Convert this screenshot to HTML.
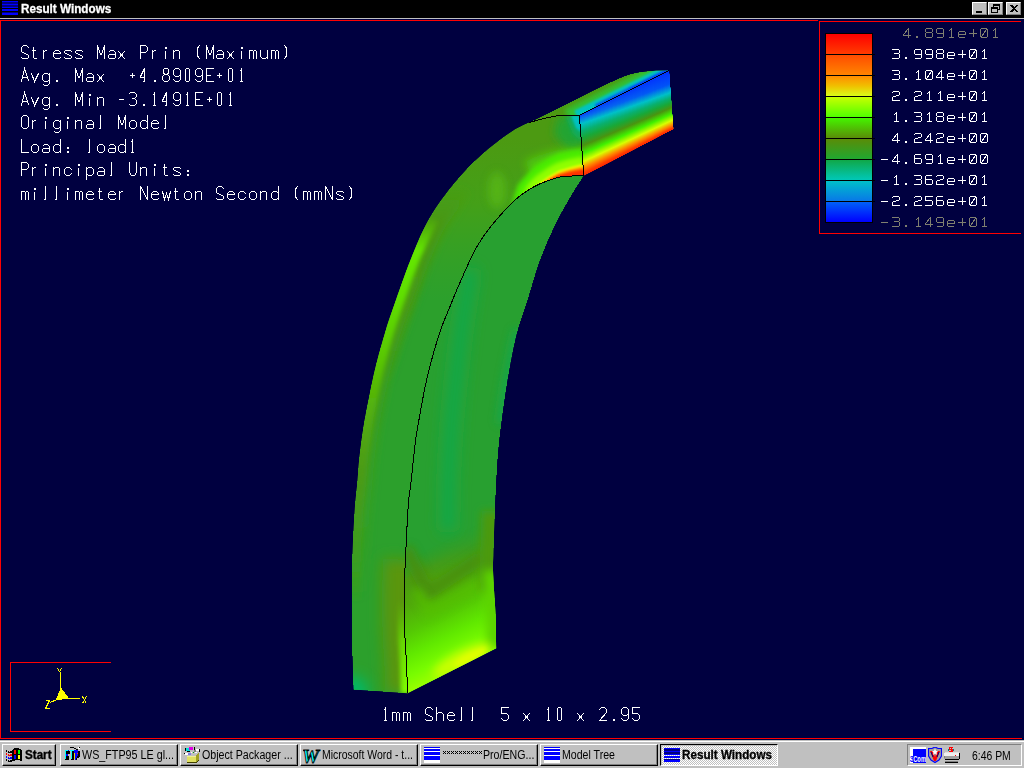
<!DOCTYPE html>
<html><head><meta charset="utf-8"><title>Result Windows</title>
<style>
html,body{margin:0;padding:0;width:1024px;height:768px;overflow:hidden;background:#000040;font-family:"Liberation Sans",sans-serif;}
#v{position:absolute;left:0;top:0;width:1024px;height:768px;}
.abs{position:absolute;}
#tb{position:absolute;left:0;top:0;width:1024px;height:18px;background:#000;}
#tbl{position:absolute;left:0;top:18px;width:1024px;height:1px;background:#c0c0c0;}
#ttl{position:absolute;left:20.6px;top:1px;height:16px;line-height:16px;font-size:12px;font-weight:bold;color:#fff;-webkit-text-stroke:0.3px #fff;white-space:nowrap;transform-origin:0 50%;transform:scaleX(0.975);}
.cb{position:absolute;top:2px;height:13px;width:15px;background:#c0c0c0;box-sizing:border-box;border-top:1px solid #fff;border-left:1px solid #fff;border-right:1px solid #808080;border-bottom:1px solid #808080;}
#task{position:absolute;left:0;top:740px;width:1024px;height:28px;background:#c0c0c0;}
#task:before{content:"";position:absolute;left:0;top:1px;width:1024px;height:1px;background:#fff;}
.btn{position:absolute;top:4px;height:22px;box-sizing:border-box;background:#c0c0c0;border-top:1px solid #fff;border-left:1px solid #fff;border-right:1px solid #000;border-bottom:1px solid #000;}
.btn:after{content:"";position:absolute;left:0;top:0;right:0;bottom:0;border-right:1px solid #808080;border-bottom:1px solid #808080;}
.btn.on{border-top:1px solid #000;border-left:1px solid #000;border-right:1px solid #fff;border-bottom:1px solid #fff;background-color:#c0c0c0;background-image:linear-gradient(45deg,#fff 25%,transparent 25%,transparent 75%,#fff 75%),linear-gradient(45deg,#fff 25%,transparent 25%,transparent 75%,#fff 75%);background-size:2px 2px;background-position:0 0,1px 1px;}
.btn.on:after{border:none;border-top:1px solid #c0c0c0;border-left:1px solid #c0c0c0;}
.bt{position:absolute;left:21px;top:3px;height:14px;line-height:14px;font-size:12px;color:#000;white-space:nowrap;transform-origin:0 50%;}
.ic{position:absolute;left:3px;top:2px;width:16px;height:16px;overflow:hidden;}
#tray{position:absolute;left:907px;top:4px;width:115px;height:22px;box-sizing:border-box;border-top:1px solid #808080;border-left:1px solid #808080;border-right:1px solid #fff;border-bottom:1px solid #fff;}
#clock{position:absolute;left:64px;top:4px;font-size:12px;line-height:14px;color:#000;white-space:nowrap;transform-origin:0 50%;transform:scaleX(0.868);}

</style></head><body>
<svg id="v" width="1024" height="768" viewBox="0 0 1024 768">
<defs>
<path id="m65" d="M0,13 L3,0 L7,12 M1,9 L5,9"/><path id="m69" d="M7,0 L0,0 L0,13 L7,13 M0,7 L4,7"/><path id="m76" d="M0,0 L0,13 L7,13"/><path id="m77" d="M0,13 L0,0 L3,9 L4,9 L7,0 L7,13"/><path id="m78" d="M0,13 L0,0 L7,13 L7,0"/><path id="m79" d="M2,0 L5,0 L7,2 L7,11 L5,13 L2,13 L0,11 L0,2 Z"/><path id="m80" d="M0,13 L0,0 L5,0 L7,2 L7,5 L5,7 L0,7"/><path id="m83" d="M7,2 L6,1 L5,0 L2,0 L0,2 L0,6 L1,7 L6,9 L7,10 L7,12 L6,13 L1,13 L0,12"/><path id="m85" d="M0,0 L0,10 L2,13 L5,13 L7,10 L7,0"/><path id="m97" d="M1,6 L2,5 L5,5 L7,7 L7,12 L6,13 L1,13 L0,12 L0,10 L1,9 L7,9"/><path id="m99" d="M7,7 L5,5 L2,5 L0,7 L0,11 L2,13 L5,13 L7,11"/><path id="m100" d="M7,0 L7,13 M7,7 L5,5 L2,5 L0,7 L0,11 L2,13 L5,13 L7,11"/><path id="m101" d="M0,8 L7,8 L7,7 L5,5 L2,5 L0,7 L0,11 L2,13 L6,13 L7,12"/><path id="m103" d="M7,5 L7,15 L5,17 L2,17 L1,16 M7,7 L5,5 L2,5 L0,7 L0,11 L2,13 L5,13 L7,11"/><path id="m104" d="M0,0 L0,13 M0,7 L2,5 L5,5 L7,7 L7,13"/><path id="m105" d="M3,6 L3,13 M3,2 L4,2 L4,3 L3,3 Z"/><path id="m108" d="M3,0 L3,13 L2,13"/><path id="m109" d="M0,5 L0,13 M0,6 L1,5 L3,5 L4,6 L4,13 M4,6 L5,5 L6,5 L7,6 L7,13"/><path id="m110" d="M0,5 L0,13 M0,7 L2,5 L5,5 L6,6 L6,13"/><path id="m111" d="M2,5 L5,5 L7,7 L7,11 L5,13 L2,13 L0,11 L0,7 Z"/><path id="m112" d="M0,5 L0,17 M0,7 L2,5 L5,5 L7,7 L7,11 L5,13 L2,13 L0,11"/><path id="m114" d="M1,5 L1,13 M1,7 L3,5 L4,5"/><path id="m115" d="M7,6 L6,5 L1,5 L0,6 L0,7 L1,8 L6,10 L7,11 L7,12 L6,13 L1,13 L0,12"/><path id="m116" d="M2,2 L2,12 L3,13 L5,13 M1,5 L4,5"/><path id="m117" d="M0,5 L0,11 L2,13 L5,13 L7,11 M7,5 L7,13"/><path id="m118" d="M0,5 L3,13 L7,5"/><path id="m119" d="M0,5 L2,13 L4,7 L6,13 L8,5"/><path id="m120" d="M0,6 L6,13 M6,6 L0,13"/><path id="m48" d="M2,0 L4,0 L5,1 L5,12 L4,13 L2,13 L1,12 L1,1 Z"/><path id="m49" d="M2,2 L3,1 L3,13 M2,13 L4,13 M3,0 L3,1"/><path id="m50" d="M0,2 L2,0 L5,0 L7,2 L7,5 L0,13 L7,13"/><path id="m51" d="M0,1 L1,0 L5,0 L7,2 L7,4 L5,6 L3,6 M5,6 L7,8 L7,11 L5,13 L1,13 L0,12"/><path id="m52" d="M4,0 L4,13 M4,0 L0,8 L0,9 L4,9 M3,13 L4,13"/><path id="m53" d="M7,0 L0,0 L0,6 L5,6 L7,8 L7,11 L5,13 L2,13 L0,11"/><path id="m56" d="M2,0 L5,0 L6,1 L6,4 L5,6 L2,6 L1,4 L1,1 Z M2,6 L0,8 L0,11 L2,13 L5,13 L7,11 L7,8 L5,6"/><path id="m57" d="M7,6 L5,8 L2,8 L0,6 L0,2 L2,0 L5,0 L7,2 L7,11 L5,13 L2,13 L0,11"/><path id="m43" d="M1,7 L5,7 M3,5 L3,9"/><path id="m45" d="M1,7 L5,7"/><path id="m46" d="M3,12 L4,12 L4,13 L3,13 Z"/><path id="m58" d="M3,8 L4,8 L4,9 L3,9 Z M3,12 L4,12 L4,13 L3,13 Z"/><path id="m40" d="M4,0 L3,1 L2,3 L2,10 L3,12 L4,13"/><path id="m41" d="M2,0 L3,1 L4,3 L4,10 L3,12 L2,13"/><path id="l48" d="M1,0 L6,0 L7,1 L7,8 L6,9 L1,9 L0,8 L0,1 Z M1,8 L6,1"/><path id="l49" d="M2,2 L4,0 L4,9 M2,9 L6,9"/><path id="l50" d="M0,1 L1,0 L6,0 L7,1 L7,3 L6,4 L1,5 L0,6 L0,9 L7,9"/><path id="l51" d="M0,0 L6,0 L7,1 L7,3 L6,4 L2,4 M6,4 L7,5 L7,8 L6,9 L0,9"/><path id="l52" d="M5,9 L5,0 L0,6 L0,7 L7,7"/><path id="l53" d="M7,0 L0,0 L0,4 L6,4 L7,5 L7,8 L6,9 L0,9"/><path id="l54" d="M6,0 L1,0 L0,1 L0,8 L1,9 L6,9 L7,8 L7,5 L6,4 L0,4"/><path id="l56" d="M1,0 L6,0 L7,1 L7,3 L6,4 L1,4 L0,3 L0,1 Z M1,4 L0,5 L0,8 L1,9 L6,9 L7,8 L7,5 L6,4"/><path id="l57" d="M7,5 L1,5 L0,4 L0,1 L1,0 L6,0 L7,1 L7,8 L6,9 L1,9"/><path id="l101" d="M0,6 L7,6 L7,4 L6,3 L1,3 L0,4 L0,8 L1,9 L6,9"/><path id="l43" d="M0,5 L7,5 M3.5,1 L3.5,8"/><path id="l45" d="M0,5 L6,5"/><path id="l46" d="M2,8 L3,8 L3,9 L2,9 Z"/>

<linearGradient id="b1" x1="0" y1="0" x2="0" y2="1"><stop offset="0" stop-color="#ff0000"/><stop offset="1" stop-color="#ff3c00"/></linearGradient>
<linearGradient id="b2" x1="0" y1="0" x2="0" y2="1"><stop offset="0" stop-color="#ff4c00"/><stop offset="1" stop-color="#ff8400"/></linearGradient>
<linearGradient id="b3" x1="0" y1="0" x2="0" y2="1"><stop offset="0" stop-color="#ff8c00"/><stop offset="0.5" stop-color="#f0c000"/><stop offset="1" stop-color="#d8fc18"/></linearGradient>
<linearGradient id="b4" x1="0" y1="0" x2="0" y2="1"><stop offset="0" stop-color="#c8ff00"/><stop offset="1" stop-color="#50ff00"/></linearGradient>
<linearGradient id="b5" x1="0" y1="0" x2="0" y2="1"><stop offset="0" stop-color="#44f400"/><stop offset="1" stop-color="#5a8c08"/></linearGradient>
<linearGradient id="b6" x1="0" y1="0" x2="0" y2="1"><stop offset="0" stop-color="#5a8c08"/><stop offset="1" stop-color="#20a830"/></linearGradient>
<linearGradient id="b7" x1="0" y1="0" x2="0" y2="1"><stop offset="0" stop-color="#10a848"/><stop offset="1" stop-color="#00c8b8"/></linearGradient>
<linearGradient id="b8" x1="0" y1="0" x2="0" y2="1"><stop offset="0" stop-color="#00c0c8"/><stop offset="1" stop-color="#0878e8"/></linearGradient>
<linearGradient id="b9" x1="0" y1="0" x2="0" y2="1"><stop offset="0" stop-color="#0060f8"/><stop offset="1" stop-color="#0000ff"/></linearGradient>


<clipPath id="cSide"><path d="M353.7,689.5 C353.5,682.6 352.6,662.9 352.3,648.0 C352.0,633.1 352.1,614.7 352.1,600.0 C352.1,585.3 351.9,574.7 352.3,560.0 C352.7,545.3 353.7,525.3 354.6,512.0 C355.5,498.7 356.8,489.2 357.6,480.0 C358.4,470.8 358.5,465.7 359.5,457.0 C360.5,448.3 361.8,437.8 363.4,427.7 C365.0,417.6 367.2,406.8 369.3,396.4 C371.4,385.9 373.3,376.1 376.1,365.0 C378.9,353.9 382.6,340.8 385.9,330.0 C389.2,319.2 391.6,312.5 396.0,300.0 C400.4,287.5 406.8,268.8 412.5,255.0 C418.2,241.2 422.9,229.6 430.0,217.5 C437.1,205.4 446.5,192.8 455.0,182.5 C463.5,172.2 471.5,164.0 481.0,155.5 C490.5,147.0 503.9,137.0 512.0,131.5 C520.1,126.0 526.5,124.0 529.4,122.5 C531.6,121.9 538.2,119.8 542.5,118.8 C546.8,117.7 551.9,116.8 555.0,116.2 C558.1,115.7 557.2,115.4 561.2,115.2 C565.3,115.1 576.4,115.2 579.4,115.2 L583.8,175.5 C581.9,175.6 576.5,175.8 572.5,176.0 C568.5,176.2 563.8,176.3 560.0,177.0 C556.2,177.7 554.2,178.5 550.0,180.0 C545.8,181.5 540.8,182.9 535.0,186.2 C529.2,189.6 522.5,193.1 515.0,200.0 C507.5,206.9 496.7,219.2 490.0,227.5 C483.3,235.8 480.0,240.8 475.0,250.0 C470.0,259.2 464.2,273.1 460.0,282.5 C455.8,291.9 453.2,298.6 450.0,306.5 C446.8,314.4 443.6,321.2 440.6,330.0 C437.6,338.8 434.2,350.5 431.8,359.3 C429.4,368.1 428.0,373.6 426.0,382.7 C424.0,391.8 421.8,403.9 420.0,414.0 C418.2,424.1 416.6,432.3 415.2,443.3 C413.8,454.3 412.4,469.9 411.3,480.0 C410.2,490.1 409.4,490.7 408.4,504.0 C407.4,517.3 406.0,546.8 405.4,560.0 C404.8,573.2 404.6,571.7 404.5,583.0 C404.4,594.3 404.3,614.9 404.6,628.0 C404.9,641.1 405.9,650.6 406.4,661.5 C406.9,672.4 407.4,687.9 407.6,693.2 Z"/></clipPath>
<clipPath id="cInner"><path d="M407.6,693.2 C407.4,687.9 406.9,672.4 406.4,661.5 C405.9,650.6 404.9,641.1 404.6,628.0 C404.3,614.9 404.4,594.3 404.5,583.0 C404.6,571.7 404.8,573.2 405.4,560.0 C406.0,546.8 407.4,517.3 408.4,504.0 C409.4,490.7 410.2,490.1 411.3,480.0 C412.4,469.9 413.8,454.3 415.2,443.3 C416.6,432.3 418.2,424.1 420.0,414.0 C421.8,403.9 424.0,391.8 426.0,382.7 C428.0,373.6 429.4,368.1 431.8,359.3 C434.2,350.5 437.6,338.8 440.6,330.0 C443.6,321.2 446.8,314.4 450.0,306.5 C453.2,298.6 455.8,291.9 460.0,282.5 C464.2,273.1 470.0,259.2 475.0,250.0 C480.0,240.8 483.3,235.8 490.0,227.5 C496.7,219.2 507.5,206.9 515.0,200.0 C522.5,193.1 529.2,189.6 535.0,186.2 C540.8,182.9 545.8,181.5 550.0,180.0 C554.2,178.5 556.2,177.7 560.0,177.0 C563.8,176.3 568.5,176.2 572.5,176.0 C576.5,175.8 581.9,175.6 583.8,175.5 C581.5,179.2 574.8,189.2 570.0,197.5 C565.2,205.8 560.0,214.6 555.0,225.0 C550.0,235.4 544.6,247.5 540.0,260.0 C535.4,272.5 531.2,288.3 527.5,300.0 C523.8,311.7 520.3,320.8 517.7,330.0 C515.1,339.2 513.9,345.6 511.9,355.4 C509.9,365.2 507.8,377.2 506.0,388.6 C504.2,400.0 502.5,412.7 501.1,423.8 C499.7,434.8 498.6,445.6 497.8,455.0 C497.0,464.4 496.8,470.6 496.2,480.0 C495.8,489.4 495.3,499.0 494.8,511.5 C494.3,524.0 493.6,545.2 493.3,555.0 C493.0,564.8 492.9,564.2 493.0,570.0 C493.1,575.8 493.6,582.7 494.0,590.0 C494.4,597.3 495.1,604.3 495.5,614.0 C495.9,623.7 496.1,642.6 496.2,648.3 Z"/></clipPath>
<clipPath id="cTop"><path d="M529.4,122.5 C533.7,120.4 546.6,114.2 555.0,110.0 C563.4,105.8 571.7,101.7 580.0,97.5 C588.3,93.3 596.7,88.8 605.0,85.0 C613.3,81.2 622.5,76.8 630.0,74.5 C637.5,72.2 643.5,71.8 650.0,71.2 C656.5,70.6 665.6,70.9 668.8,70.8 L579.4,115.2 C576.4,115.2 565.3,115.1 561.2,115.2 C557.2,115.4 558.1,115.7 555.0,116.2 C551.9,116.8 546.8,117.7 542.5,118.8 C538.2,119.8 531.6,121.9 529.4,122.5 Z"/></clipPath>
<clipPath id="cEnd"><path d="M579.4,115.2 L668.8,70.8 L673.1,128.8 L583.8,175.5 Z"/></clipPath>
<filter id="bl1" filterUnits="userSpaceOnUse" x="300" y="40" width="420" height="680"><feGaussianBlur stdDeviation="1"/></filter>
<filter id="bl2" filterUnits="userSpaceOnUse" x="300" y="40" width="420" height="680"><feGaussianBlur stdDeviation="2"/></filter>
<filter id="bl4" filterUnits="userSpaceOnUse" x="300" y="40" width="420" height="680"><feGaussianBlur stdDeviation="4"/></filter>
<filter id="bl7" filterUnits="userSpaceOnUse" x="300" y="40" width="420" height="680"><feGaussianBlur stdDeviation="7"/></filter>
<filter id="bl12" filterUnits="userSpaceOnUse" x="300" y="40" width="420" height="680"><feGaussianBlur stdDeviation="12"/></filter>
<linearGradient id="gEnd" gradientUnits="userSpaceOnUse" x1="580" y1="115.25" x2="604.5" y2="164.3">
<stop offset="0" stop-color="#0030ff"/><stop offset="0.12" stop-color="#0058f8"/><stop offset="0.28" stop-color="#00c0c4"/><stop offset="0.42" stop-color="#10a848"/><stop offset="0.53" stop-color="#4a9410"/><stop offset="0.65" stop-color="#40f000"/><stop offset="0.75" stop-color="#d8ff00"/><stop offset="0.85" stop-color="#ff8800"/><stop offset="0.95" stop-color="#ff3000"/><stop offset="1" stop-color="#ff1800"/>
</linearGradient>
<linearGradient id="ge0" gradientUnits="userSpaceOnUse" x1="581.0" y1="114.5" x2="604.7" y2="166.0"><stop offset="0.000" stop-color="#0840f8"/><stop offset="0.061" stop-color="#0870ec"/><stop offset="0.151" stop-color="#00c0c8"/><stop offset="0.271" stop-color="#08b070"/><stop offset="0.381" stop-color="#18a838"/><stop offset="0.511" stop-color="#4a9410"/><stop offset="0.641" stop-color="#40f000"/><stop offset="0.770" stop-color="#d8ff00"/><stop offset="0.870" stop-color="#ff8800"/><stop offset="0.950" stop-color="#ff4000"/><stop offset="1.000" stop-color="#ff2800"/></linearGradient>
<linearGradient id="ge1" gradientUnits="userSpaceOnUse" x1="584.9" y1="112.5" x2="608.6" y2="164.0"><stop offset="0.000" stop-color="#083ff8"/><stop offset="0.068" stop-color="#086eed"/><stop offset="0.161" stop-color="#00c0c8"/><stop offset="0.280" stop-color="#08b070"/><stop offset="0.388" stop-color="#18a838"/><stop offset="0.516" stop-color="#4a9410"/><stop offset="0.645" stop-color="#40f000"/><stop offset="0.774" stop-color="#d8ff00"/><stop offset="0.873" stop-color="#ff8800"/><stop offset="0.951" stop-color="#ff4000"/><stop offset="1.000" stop-color="#ff2800"/></linearGradient>
<linearGradient id="ge2" gradientUnits="userSpaceOnUse" x1="588.9" y1="110.5" x2="612.5" y2="161.9"><stop offset="0.000" stop-color="#073ff9"/><stop offset="0.076" stop-color="#076ded"/><stop offset="0.171" stop-color="#00c0c8"/><stop offset="0.289" stop-color="#08b070"/><stop offset="0.396" stop-color="#18a838"/><stop offset="0.522" stop-color="#4a9410"/><stop offset="0.649" stop-color="#40f000"/><stop offset="0.777" stop-color="#d8ff00"/><stop offset="0.876" stop-color="#ff8800"/><stop offset="0.953" stop-color="#ff4000"/><stop offset="1.000" stop-color="#ff2800"/></linearGradient>
<linearGradient id="ge3" gradientUnits="userSpaceOnUse" x1="592.9" y1="108.6" x2="616.5" y2="159.9"><stop offset="0.000" stop-color="#073ef9"/><stop offset="0.083" stop-color="#076cee"/><stop offset="0.181" stop-color="#00c0c8"/><stop offset="0.297" stop-color="#08b070"/><stop offset="0.403" stop-color="#18a838"/><stop offset="0.527" stop-color="#4a9410"/><stop offset="0.654" stop-color="#40f000"/><stop offset="0.781" stop-color="#d8ff00"/><stop offset="0.878" stop-color="#ff8800"/><stop offset="0.954" stop-color="#ff4000"/><stop offset="1.000" stop-color="#ff2800"/></linearGradient>
<linearGradient id="ge4" gradientUnits="userSpaceOnUse" x1="596.8" y1="106.6" x2="620.4" y2="157.8"><stop offset="0.000" stop-color="#073df9"/><stop offset="0.091" stop-color="#076aee"/><stop offset="0.191" stop-color="#00c0c8"/><stop offset="0.306" stop-color="#08b070"/><stop offset="0.411" stop-color="#18a838"/><stop offset="0.533" stop-color="#4a9410"/><stop offset="0.658" stop-color="#40f000"/><stop offset="0.784" stop-color="#d8ff00"/><stop offset="0.881" stop-color="#ff8800"/><stop offset="0.955" stop-color="#ff4000"/><stop offset="1.000" stop-color="#ff2800"/></linearGradient>
<linearGradient id="ge5" gradientUnits="userSpaceOnUse" x1="600.8" y1="104.6" x2="624.3" y2="155.8"><stop offset="0.000" stop-color="#063cfa"/><stop offset="0.098" stop-color="#0669ef"/><stop offset="0.202" stop-color="#00c0c8"/><stop offset="0.315" stop-color="#08b070"/><stop offset="0.418" stop-color="#18a838"/><stop offset="0.538" stop-color="#4a9410"/><stop offset="0.662" stop-color="#40f000"/><stop offset="0.788" stop-color="#d8ff00"/><stop offset="0.883" stop-color="#ff8800"/><stop offset="0.957" stop-color="#ff4000"/><stop offset="1.000" stop-color="#ff2800"/></linearGradient>
<linearGradient id="ge6" gradientUnits="userSpaceOnUse" x1="604.7" y1="102.6" x2="628.2" y2="153.7"><stop offset="0.000" stop-color="#063cfa"/><stop offset="0.106" stop-color="#0667ef"/><stop offset="0.212" stop-color="#00c0c8"/><stop offset="0.324" stop-color="#08b070"/><stop offset="0.426" stop-color="#18a838"/><stop offset="0.543" stop-color="#4a9410"/><stop offset="0.667" stop-color="#40f000"/><stop offset="0.791" stop-color="#d8ff00"/><stop offset="0.886" stop-color="#ff8800"/><stop offset="0.958" stop-color="#ff4000"/><stop offset="1.000" stop-color="#ff2800"/></linearGradient>
<linearGradient id="ge7" gradientUnits="userSpaceOnUse" x1="608.7" y1="100.7" x2="632.1" y2="151.7"><stop offset="0.000" stop-color="#063bfa"/><stop offset="0.113" stop-color="#0666f0"/><stop offset="0.222" stop-color="#00c0c8"/><stop offset="0.332" stop-color="#08b070"/><stop offset="0.433" stop-color="#18a838"/><stop offset="0.549" stop-color="#4a9410"/><stop offset="0.671" stop-color="#40f000"/><stop offset="0.795" stop-color="#d8ff00"/><stop offset="0.889" stop-color="#ff8800"/><stop offset="0.959" stop-color="#ff4000"/><stop offset="1.000" stop-color="#ff2800"/></linearGradient>
<linearGradient id="ge8" gradientUnits="userSpaceOnUse" x1="612.6" y1="98.7" x2="636.1" y2="149.6"><stop offset="0.000" stop-color="#053afa"/><stop offset="0.120" stop-color="#0565f0"/><stop offset="0.232" stop-color="#00c0c8"/><stop offset="0.341" stop-color="#08b070"/><stop offset="0.440" stop-color="#18a838"/><stop offset="0.554" stop-color="#4a9410"/><stop offset="0.676" stop-color="#40f000"/><stop offset="0.798" stop-color="#d8ff00"/><stop offset="0.891" stop-color="#ff8800"/><stop offset="0.961" stop-color="#ff4000"/><stop offset="1.000" stop-color="#ff2800"/></linearGradient>
<linearGradient id="ge9" gradientUnits="userSpaceOnUse" x1="616.6" y1="96.7" x2="640.0" y2="147.6"><stop offset="0.000" stop-color="#053afb"/><stop offset="0.128" stop-color="#0563f1"/><stop offset="0.242" stop-color="#00c0c8"/><stop offset="0.350" stop-color="#08b070"/><stop offset="0.448" stop-color="#18a838"/><stop offset="0.560" stop-color="#4a9410"/><stop offset="0.680" stop-color="#40f000"/><stop offset="0.802" stop-color="#d8ff00"/><stop offset="0.894" stop-color="#ff8800"/><stop offset="0.962" stop-color="#ff4000"/><stop offset="1.000" stop-color="#ff2800"/></linearGradient>
<linearGradient id="ge10" gradientUnits="userSpaceOnUse" x1="620.6" y1="94.8" x2="643.9" y2="145.5"><stop offset="0.000" stop-color="#0439fb"/><stop offset="0.135" stop-color="#0462f1"/><stop offset="0.252" stop-color="#00c0c8"/><stop offset="0.359" stop-color="#08b070"/><stop offset="0.455" stop-color="#18a838"/><stop offset="0.565" stop-color="#4a9410"/><stop offset="0.684" stop-color="#40f000"/><stop offset="0.805" stop-color="#d8ff00"/><stop offset="0.897" stop-color="#ff8800"/><stop offset="0.963" stop-color="#ff4000"/><stop offset="1.000" stop-color="#ff2800"/></linearGradient>
<linearGradient id="ge11" gradientUnits="userSpaceOnUse" x1="624.5" y1="92.8" x2="647.8" y2="143.5"><stop offset="0.000" stop-color="#0438fb"/><stop offset="0.143" stop-color="#0460f2"/><stop offset="0.262" stop-color="#00c0c8"/><stop offset="0.367" stop-color="#08b070"/><stop offset="0.463" stop-color="#18a838"/><stop offset="0.571" stop-color="#4a9410"/><stop offset="0.689" stop-color="#40f000"/><stop offset="0.809" stop-color="#d8ff00"/><stop offset="0.899" stop-color="#ff8800"/><stop offset="0.965" stop-color="#ff4000"/><stop offset="1.000" stop-color="#ff2800"/></linearGradient>
<linearGradient id="ge12" gradientUnits="userSpaceOnUse" x1="628.5" y1="90.8" x2="651.7" y2="141.4"><stop offset="0.000" stop-color="#0438fc"/><stop offset="0.150" stop-color="#045ff2"/><stop offset="0.272" stop-color="#00c0c8"/><stop offset="0.376" stop-color="#08b070"/><stop offset="0.470" stop-color="#18a838"/><stop offset="0.576" stop-color="#4a9410"/><stop offset="0.693" stop-color="#40f000"/><stop offset="0.812" stop-color="#d8ff00"/><stop offset="0.902" stop-color="#ff8800"/><stop offset="0.966" stop-color="#ff4000"/><stop offset="1.000" stop-color="#ff2800"/></linearGradient>
<linearGradient id="ge13" gradientUnits="userSpaceOnUse" x1="632.4" y1="88.9" x2="655.7" y2="139.3"><stop offset="0.000" stop-color="#0337fc"/><stop offset="0.158" stop-color="#035ef3"/><stop offset="0.282" stop-color="#00c0c8"/><stop offset="0.385" stop-color="#08b070"/><stop offset="0.478" stop-color="#18a838"/><stop offset="0.582" stop-color="#4a9410"/><stop offset="0.697" stop-color="#40f000"/><stop offset="0.816" stop-color="#d8ff00"/><stop offset="0.904" stop-color="#ff8800"/><stop offset="0.967" stop-color="#ff4000"/><stop offset="1.000" stop-color="#ff2800"/></linearGradient>
<linearGradient id="ge14" gradientUnits="userSpaceOnUse" x1="636.4" y1="86.9" x2="659.6" y2="137.3"><stop offset="0.000" stop-color="#0336fc"/><stop offset="0.165" stop-color="#035cf3"/><stop offset="0.292" stop-color="#00c0c8"/><stop offset="0.394" stop-color="#08b070"/><stop offset="0.485" stop-color="#18a838"/><stop offset="0.587" stop-color="#4a9410"/><stop offset="0.702" stop-color="#40f000"/><stop offset="0.819" stop-color="#d8ff00"/><stop offset="0.907" stop-color="#ff8800"/><stop offset="0.969" stop-color="#ff4000"/><stop offset="1.000" stop-color="#ff2800"/></linearGradient>
<linearGradient id="ge15" gradientUnits="userSpaceOnUse" x1="640.4" y1="84.9" x2="663.5" y2="135.2"><stop offset="0.000" stop-color="#0335fd"/><stop offset="0.172" stop-color="#035bf4"/><stop offset="0.302" stop-color="#00c0c8"/><stop offset="0.402" stop-color="#08b070"/><stop offset="0.492" stop-color="#18a838"/><stop offset="0.593" stop-color="#4a9410"/><stop offset="0.706" stop-color="#40f000"/><stop offset="0.823" stop-color="#d8ff00"/><stop offset="0.910" stop-color="#ff8800"/><stop offset="0.970" stop-color="#ff4000"/><stop offset="1.000" stop-color="#ff2800"/></linearGradient>
<linearGradient id="ge16" gradientUnits="userSpaceOnUse" x1="644.3" y1="83.0" x2="667.4" y2="133.2"><stop offset="0.000" stop-color="#0235fd"/><stop offset="0.180" stop-color="#0259f4"/><stop offset="0.312" stop-color="#00c0c8"/><stop offset="0.411" stop-color="#08b070"/><stop offset="0.500" stop-color="#18a838"/><stop offset="0.598" stop-color="#4a9410"/><stop offset="0.711" stop-color="#40f000"/><stop offset="0.826" stop-color="#d8ff00"/><stop offset="0.912" stop-color="#ff8800"/><stop offset="0.971" stop-color="#ff4000"/><stop offset="1.000" stop-color="#ff2800"/></linearGradient>
<linearGradient id="ge17" gradientUnits="userSpaceOnUse" x1="648.3" y1="81.0" x2="671.3" y2="131.1"><stop offset="0.000" stop-color="#0234fd"/><stop offset="0.187" stop-color="#0258f5"/><stop offset="0.322" stop-color="#00c0c8"/><stop offset="0.420" stop-color="#08b070"/><stop offset="0.507" stop-color="#18a838"/><stop offset="0.604" stop-color="#4a9410"/><stop offset="0.715" stop-color="#40f000"/><stop offset="0.830" stop-color="#d8ff00"/><stop offset="0.915" stop-color="#ff8800"/><stop offset="0.972" stop-color="#ff4000"/><stop offset="1.000" stop-color="#ff2800"/></linearGradient>
<linearGradient id="ge18" gradientUnits="userSpaceOnUse" x1="652.2" y1="79.0" x2="675.3" y2="129.1"><stop offset="0.000" stop-color="#0233fe"/><stop offset="0.195" stop-color="#0257f6"/><stop offset="0.332" stop-color="#00c0c8"/><stop offset="0.429" stop-color="#08b070"/><stop offset="0.515" stop-color="#18a838"/><stop offset="0.609" stop-color="#4a9410"/><stop offset="0.719" stop-color="#40f000"/><stop offset="0.833" stop-color="#d8ff00"/><stop offset="0.918" stop-color="#ff8800"/><stop offset="0.974" stop-color="#ff4000"/><stop offset="1.000" stop-color="#ff2800"/></linearGradient>
<linearGradient id="ge19" gradientUnits="userSpaceOnUse" x1="656.2" y1="77.0" x2="679.2" y2="127.0"><stop offset="0.000" stop-color="#0133fe"/><stop offset="0.202" stop-color="#0155f6"/><stop offset="0.342" stop-color="#00c0c8"/><stop offset="0.437" stop-color="#08b070"/><stop offset="0.522" stop-color="#18a838"/><stop offset="0.615" stop-color="#4a9410"/><stop offset="0.724" stop-color="#40f000"/><stop offset="0.837" stop-color="#d8ff00"/><stop offset="0.920" stop-color="#ff8800"/><stop offset="0.975" stop-color="#ff4000"/><stop offset="1.000" stop-color="#ff2800"/></linearGradient>
<linearGradient id="ge20" gradientUnits="userSpaceOnUse" x1="660.1" y1="75.1" x2="683.1" y2="125.0"><stop offset="0.000" stop-color="#0132fe"/><stop offset="0.210" stop-color="#0154f7"/><stop offset="0.352" stop-color="#00c0c8"/><stop offset="0.446" stop-color="#08b070"/><stop offset="0.530" stop-color="#18a838"/><stop offset="0.620" stop-color="#4a9410"/><stop offset="0.728" stop-color="#40f000"/><stop offset="0.840" stop-color="#d8ff00"/><stop offset="0.923" stop-color="#ff8800"/><stop offset="0.976" stop-color="#ff4000"/><stop offset="1.000" stop-color="#ff2800"/></linearGradient>
<linearGradient id="ge21" gradientUnits="userSpaceOnUse" x1="664.1" y1="73.1" x2="687.0" y2="122.9"><stop offset="0.000" stop-color="#0131fe"/><stop offset="0.217" stop-color="#0152f7"/><stop offset="0.362" stop-color="#00c0c8"/><stop offset="0.455" stop-color="#08b070"/><stop offset="0.537" stop-color="#18a838"/><stop offset="0.625" stop-color="#4a9410"/><stop offset="0.732" stop-color="#40f000"/><stop offset="0.844" stop-color="#d8ff00"/><stop offset="0.925" stop-color="#ff8800"/><stop offset="0.978" stop-color="#ff4000"/><stop offset="1.000" stop-color="#ff2800"/></linearGradient>
<linearGradient id="ge22" gradientUnits="userSpaceOnUse" x1="668.1" y1="71.1" x2="690.9" y2="120.9"><stop offset="0.000" stop-color="#0031ff"/><stop offset="0.224" stop-color="#0051f8"/><stop offset="0.373" stop-color="#00c0c8"/><stop offset="0.464" stop-color="#08b070"/><stop offset="0.544" stop-color="#18a838"/><stop offset="0.631" stop-color="#4a9410"/><stop offset="0.737" stop-color="#40f000"/><stop offset="0.847" stop-color="#d8ff00"/><stop offset="0.928" stop-color="#ff8800"/><stop offset="0.979" stop-color="#ff4000"/><stop offset="1.000" stop-color="#ff2800"/></linearGradient>
<linearGradient id="ge23" gradientUnits="userSpaceOnUse" x1="672.0" y1="69.2" x2="694.9" y2="118.8"><stop offset="0.000" stop-color="#0030ff"/><stop offset="0.230" stop-color="#0050f8"/><stop offset="0.380" stop-color="#00c0c8"/><stop offset="0.470" stop-color="#08b070"/><stop offset="0.550" stop-color="#18a838"/><stop offset="0.635" stop-color="#4a9410"/><stop offset="0.740" stop-color="#40f000"/><stop offset="0.850" stop-color="#d8ff00"/><stop offset="0.930" stop-color="#ff8800"/><stop offset="0.980" stop-color="#ff4000"/><stop offset="1.000" stop-color="#ff2800"/></linearGradient>

<linearGradient id="gSideTop" gradientUnits="userSpaceOnUse" x1="0" y1="140" x2="0" y2="300">
<stop offset="0" stop-color="#4c9a12" stop-opacity="1"/><stop offset="0.4" stop-color="#44a018" stop-opacity="1"/><stop offset="1" stop-color="#38a022" stop-opacity="0"/></linearGradient>
<linearGradient id="gEdge" gradientUnits="userSpaceOnUse" x1="0" y1="215" x2="0" y2="615">
<stop offset="0" stop-color="#60e000" stop-opacity="0"/><stop offset="0.09" stop-color="#64e800" stop-opacity="1"/><stop offset="0.2" stop-color="#60e000" stop-opacity="1"/><stop offset="0.34" stop-color="#5cd000" stop-opacity="0.9"/><stop offset="0.46" stop-color="#58b808" stop-opacity="0.85"/><stop offset="0.64" stop-color="#529a12" stop-opacity="0.7"/><stop offset="0.85" stop-color="#4c9a14" stop-opacity="0.4"/><stop offset="1" stop-color="#4c9a14" stop-opacity="0"/></linearGradient>
<linearGradient id="gEdgeOl2" gradientUnits="userSpaceOnUse" x1="0" y1="260" x2="0" y2="600">
<stop offset="0" stop-color="#4c9a12" stop-opacity="0"/><stop offset="0.12" stop-color="#4c9a12" stop-opacity="0.85"/><stop offset="0.55" stop-color="#489c14" stop-opacity="0.6"/><stop offset="1" stop-color="#489c14" stop-opacity="0"/></linearGradient>
<linearGradient id="gEdgeOl" gradientUnits="userSpaceOnUse" x1="0" y1="185" x2="0" y2="385">
<stop offset="0" stop-color="#4c9612" stop-opacity="0"/><stop offset="0.2" stop-color="#4c9612" stop-opacity="0.9"/><stop offset="0.6" stop-color="#4c9612" stop-opacity="0.8"/><stop offset="1" stop-color="#4c9612" stop-opacity="0"/></linearGradient>
<linearGradient id="gMidLow" gradientUnits="userSpaceOnUse" x1="0" y1="600" x2="0" y2="693">
<stop offset="0" stop-color="#60d000" stop-opacity="0"/><stop offset="0.45" stop-color="#68e000" stop-opacity="0.9"/><stop offset="1" stop-color="#80ff00" stop-opacity="1"/></linearGradient>
<linearGradient id="gInnerLow" gradientUnits="userSpaceOnUse" x1="452" y1="670.6" x2="398" y2="564">
<stop offset="0" stop-color="#98ff00"/><stop offset="0.12" stop-color="#78fc00"/><stop offset="0.28" stop-color="#60e800"/><stop offset="0.45" stop-color="#54c804"/><stop offset="0.65" stop-color="#50aa0a"/><stop offset="0.85" stop-color="#4c9a12"/><stop offset="1" stop-color="#4c9a12" stop-opacity="0"/></linearGradient>
<linearGradient id="gInnerFade" gradientUnits="userSpaceOnUse" x1="0" y1="520" x2="0" y2="580">
<stop offset="0" stop-color="#fff" stop-opacity="0"/><stop offset="1" stop-color="#fff" stop-opacity="1"/></linearGradient>
<mask id="mInnerLow"><rect x="300" y="500" width="300" height="220" fill="url(#gInnerFade)"/></mask>

</defs>
<rect x="0" y="19" width="1024" height="721" fill="#000040"/>

<g shape-rendering="crispEdges">
<path d="M353.7,689.5 C353.5,682.6 352.6,662.9 352.3,648.0 C352.0,633.1 352.1,614.7 352.1,600.0 C352.1,585.3 351.9,574.7 352.3,560.0 C352.7,545.3 353.7,525.3 354.6,512.0 C355.5,498.7 356.8,489.2 357.6,480.0 C358.4,470.8 358.5,465.7 359.5,457.0 C360.5,448.3 361.8,437.8 363.4,427.7 C365.0,417.6 367.2,406.8 369.3,396.4 C371.4,385.9 373.3,376.1 376.1,365.0 C378.9,353.9 382.6,340.8 385.9,330.0 C389.2,319.2 391.6,312.5 396.0,300.0 C400.4,287.5 406.8,268.8 412.5,255.0 C418.2,241.2 422.9,229.6 430.0,217.5 C437.1,205.4 446.5,192.8 455.0,182.5 C463.5,172.2 471.5,164.0 481.0,155.5 C490.5,147.0 503.9,137.0 512.0,131.5 C520.1,126.0 526.5,124.0 529.4,122.5 C533.7,120.4 546.6,114.2 555.0,110.0 C563.4,105.8 571.7,101.7 580.0,97.5 C588.3,93.3 596.7,88.8 605.0,85.0 C613.3,81.2 622.5,76.8 630.0,74.5 C637.5,72.2 643.5,71.8 650.0,71.2 C656.5,70.6 665.6,70.9 668.8,70.8 L673.1,128.8 L583.8,175.5 C581.5,179.2 574.8,189.2 570.0,197.5 C565.2,205.8 560.0,214.6 555.0,225.0 C550.0,235.4 544.6,247.5 540.0,260.0 C535.4,272.5 531.2,288.3 527.5,300.0 C523.8,311.7 520.3,320.8 517.7,330.0 C515.1,339.2 513.9,345.6 511.9,355.4 C509.9,365.2 507.8,377.2 506.0,388.6 C504.2,400.0 502.5,412.7 501.1,423.8 C499.7,434.8 498.6,445.6 497.8,455.0 C497.0,464.4 496.8,470.6 496.2,480.0 C495.8,489.4 495.3,499.0 494.8,511.5 C494.3,524.0 493.6,545.2 493.3,555.0 C493.0,564.8 492.9,564.2 493.0,570.0 C493.1,575.8 493.6,582.7 494.0,590.0 C494.4,597.3 495.1,604.3 495.5,614.0 C495.9,623.7 496.1,642.6 496.2,648.3 L407.6,693.2 Z" fill="#2ca02c"/>
</g>
<g clip-path="url(#cSide)">
 <path d="M353.7,689.5 C353.5,682.6 352.6,662.9 352.3,648.0 C352.0,633.1 352.1,614.7 352.1,600.0 C352.1,585.3 351.9,574.7 352.3,560.0 C352.7,545.3 353.7,525.3 354.6,512.0 C355.5,498.7 356.8,489.2 357.6,480.0 C358.4,470.8 358.5,465.7 359.5,457.0 C360.5,448.3 361.8,437.8 363.4,427.7 C365.0,417.6 367.2,406.8 369.3,396.4 C371.4,385.9 373.3,376.1 376.1,365.0 C378.9,353.9 382.6,340.8 385.9,330.0 C389.2,319.2 391.6,312.5 396.0,300.0 C400.4,287.5 406.8,268.8 412.5,255.0 C418.2,241.2 422.9,229.6 430.0,217.5 C437.1,205.4 446.5,192.8 455.0,182.5 C463.5,172.2 471.5,164.0 481.0,155.5 C490.5,147.0 503.9,137.0 512.0,131.5 C520.1,126.0 526.5,124.0 529.4,122.5 C531.6,121.9 538.2,119.8 542.5,118.8 C546.8,117.7 551.9,116.8 555.0,116.2 C558.1,115.7 557.2,115.4 561.2,115.2 C565.3,115.1 576.4,115.2 579.4,115.2 L583.8,175.5 C581.9,175.6 576.5,175.8 572.5,176.0 C568.5,176.2 563.8,176.3 560.0,177.0 C556.2,177.7 554.2,178.5 550.0,180.0 C545.8,181.5 540.8,182.9 535.0,186.2 C529.2,189.6 522.5,193.1 515.0,200.0 C507.5,206.9 496.7,219.2 490.0,227.5 C483.3,235.8 480.0,240.8 475.0,250.0 C470.0,259.2 464.2,273.1 460.0,282.5 C455.8,291.9 453.2,298.6 450.0,306.5 C446.8,314.4 443.6,321.2 440.6,330.0 C437.6,338.8 434.2,350.5 431.8,359.3 C429.4,368.1 428.0,373.6 426.0,382.7 C424.0,391.8 421.8,403.9 420.0,414.0 C418.2,424.1 416.6,432.3 415.2,443.3 C413.8,454.3 412.4,469.9 411.3,480.0 C410.2,490.1 409.4,490.7 408.4,504.0 C407.4,517.3 406.0,546.8 405.4,560.0 C404.8,573.2 404.6,571.7 404.5,583.0 C404.4,594.3 404.3,614.9 404.6,628.0 C404.9,641.1 405.9,650.6 406.4,661.5 C406.9,672.4 407.4,687.9 407.6,693.2 Z" fill="#2ca02c"/>
 <rect x="340" y="100" width="260" height="300" fill="url(#gSideTop)"/>
 <ellipse cx="497" cy="190" rx="9" ry="18" fill="#58b818" filter="url(#bl4)" opacity="0.8"/>
 <path d="M369.3,396.4 C370.4,391.2 373.3,376.1 376.1,365.0 C378.9,353.9 382.6,340.8 385.9,330.0 C389.2,319.2 391.6,312.5 396.0,300.0 C400.4,287.5 406.8,268.8 412.5,255.0 C418.2,241.2 422.9,229.6 430.0,217.5 C437.1,205.4 450.8,188.3 455.0,182.5" fill="none" stroke="url(#gEdgeOl)" stroke-width="36" filter="url(#bl4)"/>
 <path d="M352.1,600.0 C352.1,593.3 351.9,574.7 352.3,560.0 C352.7,545.3 353.7,525.3 354.6,512.0 C355.5,498.7 356.8,489.2 357.6,480.0 C358.4,470.8 358.5,465.7 359.5,457.0 C360.5,448.3 361.8,437.8 363.4,427.7 C365.0,417.6 367.2,406.8 369.3,396.4 C371.4,385.9 373.3,376.1 376.1,365.0 C378.9,353.9 382.6,340.8 385.9,330.0 C389.2,319.2 391.6,312.5 396.0,300.0 C400.4,287.5 409.8,262.5 412.5,255.0" fill="none" stroke="url(#gEdgeOl2)" stroke-width="30" filter="url(#bl4)"/>
 <path d="M352.1,600.0 C352.1,593.3 351.9,574.7 352.3,560.0 C352.7,545.3 353.7,525.3 354.6,512.0 C355.5,498.7 356.8,489.2 357.6,480.0 C358.4,470.8 358.5,465.7 359.5,457.0 C360.5,448.3 361.8,437.8 363.4,427.7 C365.0,417.6 367.2,406.8 369.3,396.4 C371.4,385.9 373.3,376.1 376.1,365.0 C378.9,353.9 382.6,340.8 385.9,330.0 C389.2,319.2 391.6,312.5 396.0,300.0 C400.4,287.5 406.8,268.8 412.5,255.0 C418.2,241.2 427.1,223.8 430.0,217.5" fill="none" stroke="url(#gEdge)" stroke-width="17" filter="url(#bl2)"/>
 <path d="M580,116 L583,150 L568,150 L554,134 L558,117 Z" fill="#24a432" filter="url(#bl4)"/><path d="M580,116 L582.5,142 L573,134 L566,116 Z" fill="#10ac60" filter="url(#bl2)"/>
 <path d="M535.0,186.2 C537.5,185.2 545.8,181.5 550.0,180.0 C554.2,178.5 556.2,177.7 560.0,177.0 C563.8,176.3 568.5,176.2 572.5,176.0 C576.5,175.8 580.8,175.6 583.8,175.5 C586.7,175.4 589.0,175.5 590.0,175.5" fill="none" stroke="#50c808" stroke-width="54" filter="url(#bl4)" stroke-linecap="butt"/>
 <path d="M512.0,204.3 L518.0,199.4 L524.1,195.3 L530.1,191.1 L536.2,187.3 L542.2,184.7 L548.2,182.2 L554.3,180.2 L560.3,178.5 L566.4,178.0 L572.4,177.5 L578.5,177.2 L584.5,177.0 L582.3,148.5 L576.5,149.4 L570.6,150.4 L564.8,151.7 L558.9,153.1 L553.0,155.7 L547.2,158.8 L541.3,162.5 L535.4,166.3 L529.6,171.8 L523.7,178.0 L517.9,185.1 L512.0,202.8 Z" fill="#48ec00" filter="url(#bl2)"/>
 <path d="M522.0,196.7 L527.2,193.1 L532.4,189.5 L537.6,186.7 L542.8,184.5 L548.0,182.3 L553.2,180.5 L558.5,179.0 L563.7,178.2 L568.9,177.8 L574.1,177.4 L579.3,177.2 L584.5,177.0 L583.0,156.5 L577.9,157.4 L572.8,158.4 L567.7,159.6 L562.7,160.9 L557.6,162.6 L552.5,165.1 L547.4,168.0 L542.3,171.4 L537.2,175.0 L532.2,179.5 L527.1,185.4 L522.0,195.2 Z" fill="#90ff00" filter="url(#bl2)"/>
 <path d="M536.0,187.3 L540.0,185.6 L544.1,184.0 L548.1,182.3 L552.2,180.9 L556.2,179.6 L560.2,178.5 L564.3,178.2 L568.3,177.8 L572.4,177.5 L576.4,177.3 L580.5,177.1 L584.5,177.0 L583.5,163.5 L579.6,164.5 L575.6,165.5 L571.7,166.5 L567.7,167.7 L563.7,168.9 L559.8,170.1 L555.8,172.2 L551.8,174.4 L547.9,176.8 L543.9,179.6 L540.0,182.5 L536.0,185.8 Z" fill="#e0ff00" filter="url(#bl1)"/>
 <path d="M542.0,184.8 L545.5,183.4 L549.1,181.9 L552.6,180.7 L556.2,179.7 L559.7,178.6 L563.2,178.2 L566.8,178.0 L570.3,177.7 L573.9,177.4 L577.4,177.3 L581.0,177.1 L584.5,177.0 L583.7,166.0 L580.3,166.8 L576.8,167.6 L573.3,168.4 L569.8,169.3 L566.3,170.3 L562.9,171.3 L559.4,172.4 L555.9,174.2 L552.4,176.1 L549.0,178.1 L545.5,180.6 L542.0,183.3 Z" fill="#ffc800" filter="url(#bl1)"/>
 <path d="M546.0,183.2 L549.2,181.8 L552.4,180.8 L555.6,179.8 L558.8,178.8 L562.0,178.3 L565.2,178.1 L568.5,177.8 L571.7,177.6 L574.9,177.4 L578.1,177.3 L581.3,177.1 L584.5,177.0 L583.9,167.5 L580.7,168.1 L577.6,168.8 L574.4,169.5 L571.2,170.3 L568.1,171.1 L564.9,172.0 L561.8,172.9 L558.6,174.0 L555.5,175.7 L552.3,177.4 L549.2,179.2 L546.0,181.7 Z" fill="#ff8000" filter="url(#bl1)"/>
 <path d="M550.0,181.5 L552.9,180.6 L555.8,179.8 L558.6,178.9 L561.5,178.4 L564.4,178.2 L567.2,177.9 L570.1,177.7 L573.0,177.5 L575.9,177.3 L578.8,177.2 L581.6,177.1 L584.5,177.0 L584.0,169.5 L581.2,170.0 L578.4,170.5 L575.5,171.1 L572.7,171.6 L569.8,172.3 L567.0,173.0 L564.2,173.7 L561.3,174.4 L558.5,175.4 L555.7,176.8 L552.8,178.3 L550.0,180.0 Z" fill="#ff3000" filter="url(#bl1)"/>
 <path d="M580.6,115.5 L582,133 L576,128 L571,115.5 Z" fill="#00c0c0" filter="url(#bl1)"/>
 <path d="M407.6,693.2 C407.4,687.9 406.9,672.4 406.4,661.5 C405.9,650.6 404.9,641.1 404.6,628.0 C404.3,614.9 404.4,594.3 404.5,583.0 C404.6,571.7 405.2,563.8 405.4,560.0" fill="none" stroke="#5a9610" stroke-width="44" filter="url(#bl7)"/>
 <path d="M407.6,693.2 C407.4,687.9 406.9,672.4 406.4,661.5 C405.9,650.6 404.9,641.1 404.6,628.0 C404.3,614.9 404.5,590.5 404.5,583.0" fill="none" stroke="url(#gMidLow)" stroke-width="13" filter="url(#bl2)"/>
 <circle cx="352" cy="692" r="16" fill="#00b868" filter="url(#bl7)"/>
</g>
<g clip-path="url(#cInner)">
 <path d="M407.6,693.2 C407.4,687.9 406.9,672.4 406.4,661.5 C405.9,650.6 404.9,641.1 404.6,628.0 C404.3,614.9 404.4,594.3 404.5,583.0 C404.6,571.7 404.8,573.2 405.4,560.0 C406.0,546.8 407.4,517.3 408.4,504.0 C409.4,490.7 410.2,490.1 411.3,480.0 C412.4,469.9 413.8,454.3 415.2,443.3 C416.6,432.3 418.2,424.1 420.0,414.0 C421.8,403.9 424.0,391.8 426.0,382.7 C428.0,373.6 429.4,368.1 431.8,359.3 C434.2,350.5 437.6,338.8 440.6,330.0 C443.6,321.2 446.8,314.4 450.0,306.5 C453.2,298.6 455.8,291.9 460.0,282.5 C464.2,273.1 470.0,259.2 475.0,250.0 C480.0,240.8 483.3,235.8 490.0,227.5 C496.7,219.2 507.5,206.9 515.0,200.0 C522.5,193.1 529.2,189.6 535.0,186.2 C540.8,182.9 545.8,181.5 550.0,180.0 C554.2,178.5 556.2,177.7 560.0,177.0 C563.8,176.3 568.5,176.2 572.5,176.0 C576.5,175.8 581.9,175.6 583.8,175.5 C581.5,179.2 574.8,189.2 570.0,197.5 C565.2,205.8 560.0,214.6 555.0,225.0 C550.0,235.4 544.6,247.5 540.0,260.0 C535.4,272.5 531.2,288.3 527.5,300.0 C523.8,311.7 520.3,320.8 517.7,330.0 C515.1,339.2 513.9,345.6 511.9,355.4 C509.9,365.2 507.8,377.2 506.0,388.6 C504.2,400.0 502.5,412.7 501.1,423.8 C499.7,434.8 498.6,445.6 497.8,455.0 C497.0,464.4 496.8,470.6 496.2,480.0 C495.8,489.4 495.3,499.0 494.8,511.5 C494.3,524.0 493.6,545.2 493.3,555.0 C493.0,564.8 492.9,564.2 493.0,570.0 C493.1,575.8 493.6,582.7 494.0,590.0 C494.4,597.3 495.1,604.3 495.5,614.0 C495.9,623.7 496.1,642.6 496.2,648.3 Z" fill="#28a030"/>
 <path d="M470.0,275.0 C468.8,282.5 465.2,304.2 463.0,320.0 C460.8,335.8 458.8,353.3 457.0,370.0 C455.2,386.7 453.3,403.3 452.0,420.0 C450.7,436.7 449.7,452.5 449.0,470.0 C448.3,487.5 448.2,515.8 448.0,525.0" fill="none" stroke="#18a848" stroke-width="15" filter="url(#bl7)" stroke-linecap="round"/>
 <path d="M501.1,423.8 C501.9,417.9 504.2,400.0 506.0,388.6 C507.8,377.2 509.9,365.2 511.9,355.4 C513.9,345.6 516.7,334.2 517.7,330.0" fill="none" stroke="#14a850" stroke-width="10" filter="url(#bl4)" opacity="0.8"/>
 <g mask="url(#mInnerLow)"><rect x="380" y="500" width="140" height="210" fill="url(#gInnerLow)"/></g>
 <path d="M406,548 L428,593 L484,556" fill="none" stroke="#4a8e10" stroke-width="13" filter="url(#bl4)" stroke-linejoin="round" opacity="0.85"/>
 <path d="M416,590 L430,612 L480,584" fill="none" stroke="#54c004" stroke-width="10" filter="url(#bl4)" opacity="0.7"/>
 <path d="M494.0,590.0 C493.8,586.7 493.1,575.8 493.0,570.0 C492.9,564.2 493.0,564.8 493.3,555.0 C493.6,545.2 494.6,518.8 494.8,511.5" fill="none" stroke="#4c9a10" stroke-width="26" filter="url(#bl4)"/>
 <path d="M496.2,648.3 C496.1,642.6 495.9,623.7 495.5,614.0 C495.1,604.3 494.4,597.3 494.0,590.0 C493.6,582.7 493.2,573.3 493.0,570.0" fill="none" stroke="#5cd400" stroke-width="20" filter="url(#bl4)"/>
 <ellipse cx="462" cy="660" rx="32" ry="9" transform="rotate(-27 462 660)" fill="#c8ff00" filter="url(#bl4)"/>
 <ellipse cx="470" cy="657" rx="18" ry="4" transform="rotate(-27 470 657)" fill="#e0ff00" filter="url(#bl2)"/>
</g>
<g clip-path="url(#cTop)">
 <path d="M529.4,122.5 C533.7,120.4 546.6,114.2 555.0,110.0 C563.4,105.8 571.7,101.7 580.0,97.5 C588.3,93.3 596.7,88.8 605.0,85.0 C613.3,81.2 622.5,76.8 630.0,74.5 C637.5,72.2 643.5,71.8 650.0,71.2 C656.5,70.6 665.6,70.9 668.8,70.8 L579.4,115.2 C576.4,115.2 565.3,115.1 561.2,115.2 C557.2,115.4 558.1,115.7 555.0,116.2 C551.9,116.8 546.8,117.7 542.5,118.8 C538.2,119.8 531.6,121.9 529.4,122.5 Z" fill="#4c9a12"/>
 <path d="M570,120.4 L672,69.2" stroke="#30c030" stroke-width="24" filter="url(#bl2)"/>
 <path d="M577,116.5 L672,69.2" stroke="#00c4c0" stroke-width="13" filter="url(#bl1)"/>
 <path d="M596,107 L672,69.2" stroke="#0058f0" stroke-width="5.5" filter="url(#bl1)"/>
 <path d="M630,90.1 L672,69.2" stroke="#0038ff" stroke-width="3" filter="url(#bl1)"/>
</g>
<g clip-path="url(#cEnd)">
 <rect x="579.0" y="60" width="97.0" height="130" fill="url(#ge0)"/><rect x="583.0" y="60" width="93.0" height="130" fill="url(#ge1)"/><rect x="586.9" y="60" width="89.1" height="130" fill="url(#ge2)"/><rect x="590.9" y="60" width="85.1" height="130" fill="url(#ge3)"/><rect x="594.8" y="60" width="81.2" height="130" fill="url(#ge4)"/><rect x="598.8" y="60" width="77.2" height="130" fill="url(#ge5)"/><rect x="602.8" y="60" width="73.2" height="130" fill="url(#ge6)"/><rect x="606.7" y="60" width="69.3" height="130" fill="url(#ge7)"/><rect x="610.7" y="60" width="65.3" height="130" fill="url(#ge8)"/><rect x="614.6" y="60" width="61.4" height="130" fill="url(#ge9)"/><rect x="618.6" y="60" width="57.4" height="130" fill="url(#ge10)"/><rect x="622.5" y="60" width="53.5" height="130" fill="url(#ge11)"/><rect x="626.5" y="60" width="49.5" height="130" fill="url(#ge12)"/><rect x="630.5" y="60" width="45.5" height="130" fill="url(#ge13)"/><rect x="634.4" y="60" width="41.6" height="130" fill="url(#ge14)"/><rect x="638.4" y="60" width="37.6" height="130" fill="url(#ge15)"/><rect x="642.3" y="60" width="33.7" height="130" fill="url(#ge16)"/><rect x="646.3" y="60" width="29.7" height="130" fill="url(#ge17)"/><rect x="650.2" y="60" width="25.8" height="130" fill="url(#ge18)"/><rect x="654.2" y="60" width="21.8" height="130" fill="url(#ge19)"/><rect x="658.2" y="60" width="17.8" height="130" fill="url(#ge20)"/><rect x="662.1" y="60" width="13.9" height="130" fill="url(#ge21)"/><rect x="666.1" y="60" width="9.9" height="130" fill="url(#ge22)"/><rect x="670.0" y="60" width="6.0" height="130" fill="url(#ge23)"/>
</g>
<g fill="none" stroke="#000" stroke-width="1" shape-rendering="crispEdges">
 <path d="M407.6,693.2 C407.4,687.9 406.9,672.4 406.4,661.5 C405.9,650.6 404.9,641.1 404.6,628.0 C404.3,614.9 404.4,594.3 404.5,583.0 C404.6,571.7 404.8,573.2 405.4,560.0 C406.0,546.8 407.4,517.3 408.4,504.0 C409.4,490.7 410.2,490.1 411.3,480.0 C412.4,469.9 413.8,454.3 415.2,443.3 C416.6,432.3 418.2,424.1 420.0,414.0 C421.8,403.9 424.0,391.8 426.0,382.7 C428.0,373.6 429.4,368.1 431.8,359.3 C434.2,350.5 437.6,338.8 440.6,330.0 C443.6,321.2 446.8,314.4 450.0,306.5 C453.2,298.6 455.8,291.9 460.0,282.5 C464.2,273.1 470.0,259.2 475.0,250.0 C480.0,240.8 483.3,235.8 490.0,227.5 C496.7,219.2 507.5,206.9 515.0,200.0 C522.5,193.1 529.2,189.6 535.0,186.2 C540.8,182.9 545.8,181.5 550.0,180.0 C554.2,178.5 556.2,177.7 560.0,177.0 C563.8,176.3 568.5,176.2 572.5,176.0 C576.5,175.8 581.9,175.6 583.8,175.5"/>
 <path d="M529.4,122.5 C531.6,121.9 538.2,119.8 542.5,118.8 C546.8,117.7 551.9,116.8 555.0,116.2 C558.1,115.7 557.2,115.4 561.2,115.2 C565.3,115.1 576.4,115.2 579.4,115.2"/>
 <path d="M579.4,115.2 L583.8,175.5"/>
 <path d="M579.4,115.2 L668.8,70.8"/>
</g>


<g fill="#ff0000" shape-rendering="crispEdges">
<rect x="0" y="20" width="818" height="1"/>
<rect x="0" y="20" width="1" height="719"/>
<rect x="0" y="738" width="1022" height="1"/>
<rect x="819" y="21" width="202" height="1"/>
<rect x="819" y="21" width="1" height="213"/>
<rect x="819" y="233" width="202" height="1"/>
<rect x="10" y="662" width="101" height="1"/>
<rect x="10" y="662" width="1" height="70"/>
<rect x="10" y="731" width="101" height="1"/>
</g>

<g shape-rendering="crispEdges"><rect x="825" y="33" width="48" height="190" fill="#000"/><rect x="826" y="34" width="46" height="20" fill="url(#b1)"/><rect x="826" y="55" width="46" height="20" fill="url(#b2)"/><rect x="825" y="54" width="50" height="1" fill="#000"/><rect x="826" y="76" width="46" height="20" fill="url(#b3)"/><rect x="825" y="75" width="50" height="1" fill="#000"/><rect x="826" y="97" width="46" height="20" fill="url(#b4)"/><rect x="825" y="96" width="50" height="1" fill="#000"/><rect x="826" y="118" width="46" height="20" fill="url(#b5)"/><rect x="825" y="117" width="50" height="1" fill="#000"/><rect x="826" y="139" width="46" height="20" fill="url(#b6)"/><rect x="825" y="138" width="50" height="1" fill="#000"/><rect x="826" y="160" width="46" height="20" fill="url(#b7)"/><rect x="825" y="159" width="50" height="1" fill="#000"/><rect x="826" y="181" width="46" height="20" fill="url(#b8)"/><rect x="825" y="180" width="50" height="1" fill="#000"/><rect x="826" y="202" width="46" height="20" fill="url(#b9)"/><rect x="825" y="201" width="50" height="1" fill="#000"/></g>
<g transform="translate(0.5,0.5)" fill="none" stroke="#fff" stroke-width="1" shape-rendering="crispEdges" stroke-linecap="square">
<use href="#m83" x="21" y="45"/><use href="#m116" x="31" y="45"/><use href="#m114" x="42" y="45"/><use href="#m101" x="53" y="45"/><use href="#m115" x="64" y="45"/><use href="#m115" x="75" y="45"/><use href="#m77" x="97" y="45"/><use href="#m97" x="108" y="45"/><use href="#m120" x="118" y="45"/><use href="#m80" x="140" y="45"/><use href="#m114" x="151" y="45"/><use href="#m105" x="162" y="45"/><use href="#m110" x="173" y="45"/><use href="#m40" x="195" y="45"/><use href="#m77" x="206" y="45"/><use href="#m97" x="216" y="45"/><use href="#m120" x="227" y="45"/><use href="#m105" x="238" y="45"/><use href="#m109" x="249" y="45"/><use href="#m117" x="260" y="45"/><use href="#m109" x="271" y="45"/><use href="#m41" x="282" y="45"/><use href="#m65" x="21" y="68"/><use href="#m118" x="31" y="68"/><use href="#m103" x="42" y="68"/><use href="#m46" x="53" y="68"/><use href="#m77" x="75" y="68"/><use href="#m97" x="86" y="68"/><use href="#m120" x="97" y="68"/><use href="#m43" x="129" y="68"/><use href="#m52" x="140" y="68"/><use href="#m46" x="151" y="68"/><use href="#m56" x="162" y="68"/><use href="#m57" x="173" y="68"/><use href="#m48" x="184" y="68"/><use href="#m57" x="195" y="68"/><use href="#m69" x="206" y="68"/><use href="#m43" x="216" y="68"/><use href="#m48" x="227" y="68"/><use href="#m49" x="238" y="68"/><use href="#m65" x="21" y="92"/><use href="#m118" x="31" y="92"/><use href="#m103" x="42" y="92"/><use href="#m46" x="53" y="92"/><use href="#m77" x="75" y="92"/><use href="#m105" x="86" y="92"/><use href="#m110" x="97" y="92"/><use href="#m45" x="118" y="92"/><use href="#m51" x="129" y="92"/><use href="#m46" x="140" y="92"/><use href="#m49" x="151" y="92"/><use href="#m52" x="162" y="92"/><use href="#m57" x="173" y="92"/><use href="#m49" x="184" y="92"/><use href="#m69" x="195" y="92"/><use href="#m43" x="206" y="92"/><use href="#m48" x="216" y="92"/><use href="#m49" x="227" y="92"/><use href="#m79" x="21" y="115"/><use href="#m114" x="31" y="115"/><use href="#m105" x="42" y="115"/><use href="#m103" x="53" y="115"/><use href="#m105" x="64" y="115"/><use href="#m110" x="75" y="115"/><use href="#m97" x="86" y="115"/><use href="#m108" x="97" y="115"/><use href="#m77" x="118" y="115"/><use href="#m111" x="129" y="115"/><use href="#m100" x="140" y="115"/><use href="#m101" x="151" y="115"/><use href="#m108" x="162" y="115"/><use href="#m76" x="21" y="139"/><use href="#m111" x="31" y="139"/><use href="#m97" x="42" y="139"/><use href="#m100" x="53" y="139"/><use href="#m58" x="64" y="139"/><use href="#m108" x="86" y="139"/><use href="#m111" x="97" y="139"/><use href="#m97" x="108" y="139"/><use href="#m100" x="118" y="139"/><use href="#m49" x="129" y="139"/><use href="#m80" x="21" y="162"/><use href="#m114" x="31" y="162"/><use href="#m105" x="42" y="162"/><use href="#m110" x="53" y="162"/><use href="#m99" x="64" y="162"/><use href="#m105" x="75" y="162"/><use href="#m112" x="86" y="162"/><use href="#m97" x="97" y="162"/><use href="#m108" x="108" y="162"/><use href="#m85" x="129" y="162"/><use href="#m110" x="140" y="162"/><use href="#m105" x="151" y="162"/><use href="#m116" x="162" y="162"/><use href="#m115" x="173" y="162"/><use href="#m58" x="184" y="162"/><use href="#m109" x="21" y="186"/><use href="#m105" x="31" y="186"/><use href="#m108" x="42" y="186"/><use href="#m108" x="53" y="186"/><use href="#m105" x="64" y="186"/><use href="#m109" x="75" y="186"/><use href="#m101" x="86" y="186"/><use href="#m116" x="97" y="186"/><use href="#m101" x="108" y="186"/><use href="#m114" x="118" y="186"/><use href="#m78" x="140" y="186"/><use href="#m101" x="151" y="186"/><use href="#m119" x="162" y="186"/><use href="#m116" x="173" y="186"/><use href="#m111" x="184" y="186"/><use href="#m110" x="195" y="186"/><use href="#m83" x="216" y="186"/><use href="#m101" x="227" y="186"/><use href="#m99" x="238" y="186"/><use href="#m111" x="249" y="186"/><use href="#m110" x="260" y="186"/><use href="#m100" x="271" y="186"/><use href="#m40" x="293" y="186"/><use href="#m109" x="303" y="186"/><use href="#m109" x="314" y="186"/><use href="#m78" x="325" y="186"/><use href="#m115" x="336" y="186"/><use href="#m41" x="347" y="186"/><use href="#m49" x="382" y="707"/><use href="#m109" x="392" y="707"/><use href="#m109" x="403" y="707"/><use href="#m83" x="425" y="707"/><use href="#m104" x="436" y="707"/><use href="#m101" x="447" y="707"/><use href="#m108" x="458" y="707"/><use href="#m108" x="469" y="707"/><use href="#m53" x="501" y="707"/><use href="#m120" x="523" y="707"/><use href="#m49" x="545" y="707"/><use href="#m48" x="556" y="707"/><use href="#m120" x="577" y="707"/><use href="#m50" x="599" y="707"/><use href="#m46" x="610" y="707"/><use href="#m57" x="621" y="707"/><use href="#m53" x="632" y="707"/>
<g stroke="#808070"><use href="#l52" x="903" y="28"/><use href="#l46" x="914" y="28"/><use href="#l56" x="925" y="28"/><use href="#l57" x="936" y="28"/><use href="#l49" x="947" y="28"/><use href="#l101" x="958" y="28"/><use href="#l43" x="969" y="28"/><use href="#l48" x="980" y="28"/><use href="#l49" x="991" y="28"/></g><g stroke="#fff"><use href="#l51" x="892" y="49"/><use href="#l46" x="903" y="49"/><use href="#l57" x="914" y="49"/><use href="#l57" x="925" y="49"/><use href="#l56" x="936" y="49"/><use href="#l101" x="947" y="49"/><use href="#l43" x="958" y="49"/><use href="#l48" x="969" y="49"/><use href="#l49" x="980" y="49"/></g><g stroke="#fff"><use href="#l51" x="892" y="70"/><use href="#l46" x="903" y="70"/><use href="#l49" x="914" y="70"/><use href="#l48" x="925" y="70"/><use href="#l52" x="936" y="70"/><use href="#l101" x="947" y="70"/><use href="#l43" x="958" y="70"/><use href="#l48" x="969" y="70"/><use href="#l49" x="980" y="70"/></g><g stroke="#fff"><use href="#l50" x="892" y="91"/><use href="#l46" x="903" y="91"/><use href="#l50" x="914" y="91"/><use href="#l49" x="925" y="91"/><use href="#l49" x="936" y="91"/><use href="#l101" x="947" y="91"/><use href="#l43" x="958" y="91"/><use href="#l48" x="969" y="91"/><use href="#l49" x="980" y="91"/></g><g stroke="#fff"><use href="#l49" x="892" y="112"/><use href="#l46" x="903" y="112"/><use href="#l51" x="914" y="112"/><use href="#l49" x="925" y="112"/><use href="#l56" x="936" y="112"/><use href="#l101" x="947" y="112"/><use href="#l43" x="958" y="112"/><use href="#l48" x="969" y="112"/><use href="#l49" x="980" y="112"/></g><g stroke="#fff"><use href="#l52" x="892" y="133"/><use href="#l46" x="903" y="133"/><use href="#l50" x="914" y="133"/><use href="#l52" x="925" y="133"/><use href="#l50" x="936" y="133"/><use href="#l101" x="947" y="133"/><use href="#l43" x="958" y="133"/><use href="#l48" x="969" y="133"/><use href="#l48" x="980" y="133"/></g><g stroke="#fff"><use href="#l45" x="881" y="154"/><use href="#l52" x="892" y="154"/><use href="#l46" x="903" y="154"/><use href="#l54" x="914" y="154"/><use href="#l57" x="925" y="154"/><use href="#l49" x="936" y="154"/><use href="#l101" x="947" y="154"/><use href="#l43" x="958" y="154"/><use href="#l48" x="969" y="154"/><use href="#l48" x="980" y="154"/></g><g stroke="#fff"><use href="#l45" x="881" y="175"/><use href="#l49" x="892" y="175"/><use href="#l46" x="903" y="175"/><use href="#l51" x="914" y="175"/><use href="#l54" x="925" y="175"/><use href="#l50" x="936" y="175"/><use href="#l101" x="947" y="175"/><use href="#l43" x="958" y="175"/><use href="#l48" x="969" y="175"/><use href="#l49" x="980" y="175"/></g><g stroke="#fff"><use href="#l45" x="881" y="196"/><use href="#l50" x="892" y="196"/><use href="#l46" x="903" y="196"/><use href="#l50" x="914" y="196"/><use href="#l53" x="925" y="196"/><use href="#l54" x="936" y="196"/><use href="#l101" x="947" y="196"/><use href="#l43" x="958" y="196"/><use href="#l48" x="969" y="196"/><use href="#l49" x="980" y="196"/></g><g stroke="#808070"><use href="#l45" x="881" y="217"/><use href="#l51" x="892" y="217"/><use href="#l46" x="903" y="217"/><use href="#l49" x="914" y="217"/><use href="#l52" x="925" y="217"/><use href="#l57" x="936" y="217"/><use href="#l101" x="947" y="217"/><use href="#l43" x="958" y="217"/><use href="#l48" x="969" y="217"/><use href="#l49" x="980" y="217"/></g>
</g>

<g stroke="#ffff00" fill="none" stroke-width="1" shape-rendering="crispEdges">
<path d="M60.5,672 L60.5,689"/>
<path d="M57.5,668.5 L59.5,671.5 L61.5,668.5"/>
<path d="M68,698.5 L80,698.5"/>
<path d="M82.5,696.5 L86.5,703.5 M86.5,696.5 L82.5,703.5"/>
<path d="M57,699.5 L50,702.5"/>
<path d="M45.5,700.5 L49.5,700.5 L45.5,708.5 L49.5,708.5"/>
<path d="M61,688.5 L56.5,699.5 L68.5,698.5 Z" fill="#ffff00"/>
</g>

</svg>
<div id="tb">
<svg class="abs" style="left:2px;top:1px" width="16" height="14" shape-rendering="crispEdges"><rect x="0" y="0" width="16" height="7" fill="#000080"/><rect x="0" y="0" width="16" height="1" fill="#0000ff"/><rect x="0" y="3" width="16" height="1" fill="#0000ff"/><rect x="0" y="6" width="16" height="1" fill="#0000ff"/><rect x="0" y="8" width="16" height="2" fill="#0000ff"/><rect x="0" y="11" width="16" height="1" fill="#000080"/><rect x="0" y="12" width="16" height="2" fill="#0000ff"/></svg>
<div id="ttl">Result Windows</div>
<div class="cb" style="left:972px"><svg width="13" height="11" style="position:absolute;left:0;top:0" shape-rendering="crispEdges"><rect x="3" y="8" width="6" height="2" fill="#000"/></svg></div>
<div class="cb" style="left:988px"><svg width="14" height="11" style="position:absolute;left:0;top:0" shape-rendering="crispEdges" fill="none" stroke="#000"><rect x="4.5" y="1.5" width="6" height="5"/><rect x="2.5" y="4.5" width="6" height="5" fill="#c0c0c0"/><path d="M4,2.5 H11 M2,5.5 H9"/></svg></div>
<div class="cb" style="left:1006px"><svg width="14" height="11" style="position:absolute;left:0;top:0" shape-rendering="crispEdges"><path d="M3,2 h2 l2,2 l2,-2 h2 l-3,3.5 l3,3.5 h-2 l-2,-2 l-2,2 h-2 l3,-3.5 z" fill="#000"/></svg></div>
</div>
<div id="tbl"></div>
<div id="task">
<div class="btn" style="left:2px;width:54px"><div class="ic" id="winlogo" style="left:3px;top:3px;width:16px;height:14px"><svg width="16" height="14" viewBox="0 0 16 14" shape-rendering="crispEdges" style="position:absolute;left:0;top:0;"><path d="M6,2 L7,1 L9,0 L12,0 L14,1 L16,2 L16,14 L15,13 L13,12 L12,12 L10,12 L8,13 L6,13 Z" fill="#000"/><rect x="8" y="2" width="2" height="4" fill="#ff0000"/><rect x="12" y="2" width="2" height="4" fill="#00ff00"/><rect x="8" y="7" width="2" height="4" fill="#0000ff"/><rect x="12" y="7" width="2" height="4" fill="#ffff00"/><path d="M9,2 h1 v1 h-1z M8,5 h1 v1 h-1z" fill="#ff0000"/><rect x="0" y="2" width="1" height="2" fill="#000"/><rect x="0" y="5" width="1" height="2" fill="#ff0000"/><rect x="0" y="8" width="1" height="2" fill="#0000ff"/><rect x="0" y="11" width="1" height="2" fill="#000"/><rect x="2" y="3" width="4" height="2" fill="#000"/><rect x="2" y="6" width="4" height="2" fill="#ff0000"/><rect x="2" y="9" width="4" height="2" fill="#0000ff"/><rect x="2" y="12" width="4" height="2" fill="#000"/><rect x="3" y="3" width="1" height="1" fill="#c0c0c0"/><rect x="3" y="6" width="1" height="1" fill="#c0c0c0"/><rect x="3" y="9" width="1" height="1" fill="#c0c0c0"/><rect x="3" y="12" width="1" height="1" fill="#c0c0c0"/></svg></div><div class="bt" style="left:22px;font-weight:bold;-webkit-text-stroke:0.35px #000;transform:scaleX(0.97)">Start</div></div>
<div class="btn" style="left:60px;width:118px"><div class="ic" id="i1" style="left:3px;top:1px;width:16px;height:15px"><svg width="16" height="15" viewBox="0 0 16 15" shape-rendering="crispEdges" style="position:absolute;left:0;top:0;"><rect x="6" y="1" width="4" height="1" fill="#000"/><rect x="10" y="2" width="2" height="1" fill="#000"/><rect x="12" y="3" width="2" height="1" fill="#000"/><rect x="14" y="1" width="2" height="2" fill="#fff"/><rect x="15" y="1" width="1" height="1" fill="#000"/><rect x="1" y="4" width="1" height="9" fill="#00ffff"/><rect x="1" y="4" width="4" height="1" fill="#00ffff"/><rect x="4" y="4" width="1" height="1" fill="#0000ff"/><rect x="2" y="5" width="4" height="3" fill="#000"/><rect x="2" y="8" width="2" height="3" fill="#0000ff"/><rect x="2" y="10" width="3" height="4" fill="#000"/><rect x="1" y="13" width="1" height="1" fill="#000"/><rect x="6" y="4" width="4" height="1" fill="#00ffff"/><rect x="7" y="5" width="1" height="8" fill="#00ffff"/><rect x="8" y="5" width="2" height="9" fill="#000"/><rect x="7" y="13" width="1" height="1" fill="#000"/><rect x="10" y="4" width="4" height="4" fill="#0000ff"/><rect x="10" y="7" width="1" height="6" fill="#e0e000"/><rect x="11" y="7" width="2" height="7" fill="#0000ff"/><rect x="12" y="8" width="2" height="2" fill="#0000ff"/><rect x="14" y="5" width="2" height="6" fill="#000"/><rect x="13" y="10" width="2" height="2" fill="#000"/><rect x="13" y="7" width="1" height="1" fill="#ff4000"/><rect x="12" y="12" width="1" height="2" fill="#000"/></svg></div><div class="bt" style="transform:scaleX(0.896)">WS_FTP95 LE gl...</div></div>
<div class="btn" style="left:180px;width:118px"><div class="ic" id="i2" style="left:3px;top:2px;width:16px;height:16px"><svg width="16" height="16" viewBox="0 0 16 16" shape-rendering="crispEdges" style="position:absolute;left:0;top:0;"><rect x="3" y="9" width="9" height="6" fill="#e0e060"/><rect x="3" y="9" width="9" height="1" fill="#f0f090"/><path d="M12,9 L15,5 L15,12 L12,15 Z" fill="#a0a020"/><rect x="3" y="15" width="9" height="1" fill="#404000"/><path d="M12,16 L12,15 L15,12 L15,13 Z" fill="#404000"/><rect x="2" y="1" width="4" height="3" fill="#00e0e0"/><rect x="1" y="1" width="1" height="3" fill="#000"/><rect x="5" y="0" width="4" height="3" fill="#e000e0"/><rect x="3" y="4" width="3" height="1" fill="#000"/><rect x="1" y="6" width="3" height="2" fill="#fff"/><rect x="0" y="6" width="1" height="1" fill="#000"/><rect x="4" y="6" width="3" height="2" fill="#8080e0"/><rect x="7" y="5" width="1" height="1" fill="#fff"/><rect x="9" y="5" width="1" height="1" fill="#00a000"/><rect x="10" y="0" width="1" height="3" fill="#000"/><rect x="10" y="3" width="2" height="2" fill="#808080"/><rect x="12" y="2" width="3" height="2" fill="#fff"/><rect x="15" y="2" width="1" height="3" fill="#000"/><rect x="11" y="5" width="2" height="1" fill="#fff"/></svg></div><div class="bt" style="transform:scaleX(0.888)">Object Packager ...</div></div>
<div class="btn" style="left:300px;width:118px"><div class="ic" id="i3" style="left:2px;top:3px;width:18px;height:16px"><svg width="18" height="16" viewBox="0 0 18 16" shape-rendering="crispEdges" style="position:absolute;left:0;top:0;"><text x="-1" y="14.5" font-family="Liberation Serif" font-weight="bold" font-style="italic" font-size="19" fill="#00ffff" stroke="#000" stroke-width="0.9" textLength="17" lengthAdjust="spacingAndGlyphs">W</text></svg></div><div class="bt" style="transform:scaleX(0.871)">Microsoft Word - t...</div></div>
<div class="btn" style="left:420px;width:118px"><div class="ic" id="i4" style="left:3px;top:2px;width:16px;height:16px"><svg width="16" height="16" viewBox="0 0 16 16" shape-rendering="crispEdges" style="position:absolute;left:0;top:0;"><rect x="0" y="0" width="16" height="16" fill="#fff"/><rect x="0" y="0" width="16" height="1" fill="#0000ff"/><rect x="0" y="2" width="16" height="2" fill="#0000ff"/><rect x="0" y="5" width="16" height="3" fill="#0000ff"/><rect x="0" y="9" width="16" height="4" fill="#0000ff"/></svg></div><div class="abs" style="left:22px;top:6px;width:40px;height:3px"><svg width="40" height="3" viewBox="0 0 40 3" shape-rendering="crispEdges" style="position:absolute;left:0;top:0;"><rect x="0" y="0" width="1" height="1" fill="#000"/><rect x="2" y="0" width="1" height="1" fill="#000"/><rect x="1" y="1" width="1" height="1" fill="#000"/><rect x="0" y="2" width="1" height="1" fill="#000"/><rect x="2" y="2" width="1" height="1" fill="#000"/><rect x="4" y="0" width="1" height="1" fill="#000"/><rect x="6" y="0" width="1" height="1" fill="#000"/><rect x="5" y="1" width="1" height="1" fill="#000"/><rect x="4" y="2" width="1" height="1" fill="#000"/><rect x="6" y="2" width="1" height="1" fill="#000"/><rect x="8" y="0" width="1" height="1" fill="#000"/><rect x="10" y="0" width="1" height="1" fill="#000"/><rect x="9" y="1" width="1" height="1" fill="#000"/><rect x="8" y="2" width="1" height="1" fill="#000"/><rect x="10" y="2" width="1" height="1" fill="#000"/><rect x="12" y="0" width="1" height="1" fill="#000"/><rect x="14" y="0" width="1" height="1" fill="#000"/><rect x="13" y="1" width="1" height="1" fill="#000"/><rect x="12" y="2" width="1" height="1" fill="#000"/><rect x="14" y="2" width="1" height="1" fill="#000"/><rect x="16" y="0" width="1" height="1" fill="#000"/><rect x="18" y="0" width="1" height="1" fill="#000"/><rect x="17" y="1" width="1" height="1" fill="#000"/><rect x="16" y="2" width="1" height="1" fill="#000"/><rect x="18" y="2" width="1" height="1" fill="#000"/><rect x="20" y="0" width="1" height="1" fill="#000"/><rect x="22" y="0" width="1" height="1" fill="#000"/><rect x="21" y="1" width="1" height="1" fill="#000"/><rect x="20" y="2" width="1" height="1" fill="#000"/><rect x="22" y="2" width="1" height="1" fill="#000"/><rect x="24" y="0" width="1" height="1" fill="#000"/><rect x="26" y="0" width="1" height="1" fill="#000"/><rect x="25" y="1" width="1" height="1" fill="#000"/><rect x="24" y="2" width="1" height="1" fill="#000"/><rect x="26" y="2" width="1" height="1" fill="#000"/><rect x="28" y="0" width="1" height="1" fill="#000"/><rect x="30" y="0" width="1" height="1" fill="#000"/><rect x="29" y="1" width="1" height="1" fill="#000"/><rect x="28" y="2" width="1" height="1" fill="#000"/><rect x="30" y="2" width="1" height="1" fill="#000"/><rect x="32" y="0" width="1" height="1" fill="#000"/><rect x="34" y="0" width="1" height="1" fill="#000"/><rect x="33" y="1" width="1" height="1" fill="#000"/><rect x="32" y="2" width="1" height="1" fill="#000"/><rect x="34" y="2" width="1" height="1" fill="#000"/><rect x="36" y="0" width="1" height="1" fill="#000"/><rect x="38" y="0" width="1" height="1" fill="#000"/><rect x="37" y="1" width="1" height="1" fill="#000"/><rect x="36" y="2" width="1" height="1" fill="#000"/><rect x="38" y="2" width="1" height="1" fill="#000"/></svg></div><div class="bt" id="proe" style="left:62px;transform:scaleX(0.885)">Pro/ENG...</div></div>
<div class="btn" style="left:540px;width:118px"><div class="ic" id="i5" style="left:3px;top:2px;width:16px;height:16px"><svg width="16" height="16" viewBox="0 0 16 16" shape-rendering="crispEdges" style="position:absolute;left:0;top:0;"><rect x="0" y="0" width="16" height="16" fill="#fff"/><rect x="0" y="0" width="16" height="1" fill="#0000ff"/><rect x="0" y="2" width="16" height="2" fill="#0000ff"/><rect x="0" y="5" width="16" height="3" fill="#0000ff"/><rect x="0" y="9" width="16" height="4" fill="#0000ff"/></svg></div><div class="bt" style="transform:scaleX(0.883)">Model Tree</div></div>
<div class="btn on" style="left:660px;width:118px"><div class="ic" id="i6" style="left:3px;top:3px;width:16px;height:14px"><svg width="16" height="14" viewBox="0 0 16 14" shape-rendering="crispEdges" style="position:absolute;left:0;top:0;"><rect x="0" y="0" width="16" height="7" fill="#000080"/><rect x="0" y="0" width="16" height="1" fill="#0000ff"/><rect x="0" y="3" width="16" height="1" fill="#0000ff"/><rect x="0" y="6" width="16" height="1" fill="#0000ff"/><rect x="0" y="8" width="16" height="2" fill="#0000ff"/><rect x="0" y="11" width="16" height="1" fill="#000080"/><rect x="0" y="12" width="16" height="2" fill="#0000ff"/></svg></div><div class="bt" style="font-weight:bold;-webkit-text-stroke:0.3px #000;transform:scaleX(0.972)">Result Windows</div></div>
<div id="tray"><div class="abs" style="left:2px;top:2px;width:16px;height:16px"><svg width="16" height="16" viewBox="0 0 16 16" shape-rendering="crispEdges" style="position:absolute;left:0;top:0;"><rect x="0" y="0" width="16" height="16" fill="#fff"/><rect x="3" y="2" width="13" height="14" fill="#0000ff"/><text x="0" y="14.6" font-family="Liberation Sans" font-weight="bold" font-size="8.5" fill="#fff" textLength="16" lengthAdjust="spacingAndGlyphs">3Com</text><rect x="0" y="9" width="3" height="7" fill="#fff"/><text x="-0.3" y="14.6" font-family="Liberation Sans" font-weight="bold" font-size="8.5" fill="#0000ff" textLength="4" lengthAdjust="spacingAndGlyphs" clip-path="inset(0)">3</text></svg></div><div class="abs" style="left:20px;top:2px;width:14px;height:16px"><svg width="14" height="16" viewBox="0 0 14 16" shape-rendering="crispEdges" style="position:absolute;left:0;top:0;shape-rendering:auto"><path d="M0.5,1.5 L4,1.5 L7,0 L10,1.5 L13.5,1.5 L13.5,9 L11,13 L7,15.5 L3,13 L0.5,9 Z" fill="#a0a0a0" stroke="#0000ff" stroke-width="1.2"/><path d="M2,4 L5,4 L7,10 L9,4 L12,4 L8,14 L6,14 Z" fill="#ff0000"/><path d="M7,1.5 L8,4 L10,4 L8.5,5.5 L9,8 L7,6.5 L5,8 L5.5,5.5 L4,4 L6,4 Z" fill="#fff"/><path d="M3,5 L5,10 M11,5 L9,10" stroke="#000080" stroke-width="1"/></svg></div><div class="abs" style="left:36px;top:2px;width:16px;height:16px"><svg width="16" height="16" viewBox="0 0 16 16" shape-rendering="crispEdges" style="position:absolute;left:0;top:0;"><path d="M5,0 h4 v1 h-3 v1 h3 v3 h-4 v-1 h3 v-1 h-3 z" fill="#ff0000"/><rect x="7" y="0" width="1" height="6" fill="#ff0000"/><rect x="4" y="2" width="1" height="2" fill="#008080"/><rect x="9" y="2" width="1" height="2" fill="#008080"/><rect x="1" y="5" width="14" height="1" fill="#e0e0e0"/><rect x="0" y="6" width="15" height="3" fill="#f0f0f0"/><rect x="11" y="8" width="1" height="1" fill="#ff0000"/><rect x="0" y="9" width="15" height="3" fill="#a0a0a0"/><rect x="15" y="6" width="1" height="6" fill="#000"/><rect x="0" y="9" width="1" height="2" fill="#808080"/><rect x="1" y="12" width="14" height="1" fill="#000"/><rect x="1" y="13" width="14" height="1" fill="#c0c0c0"/><rect x="1" y="14" width="13" height="2" fill="#000"/><rect x="1" y="14" width="13" height="1" fill="#808080"/></svg></div><div id="clock">6:46 PM</div></div>
</div>

</body></html>
